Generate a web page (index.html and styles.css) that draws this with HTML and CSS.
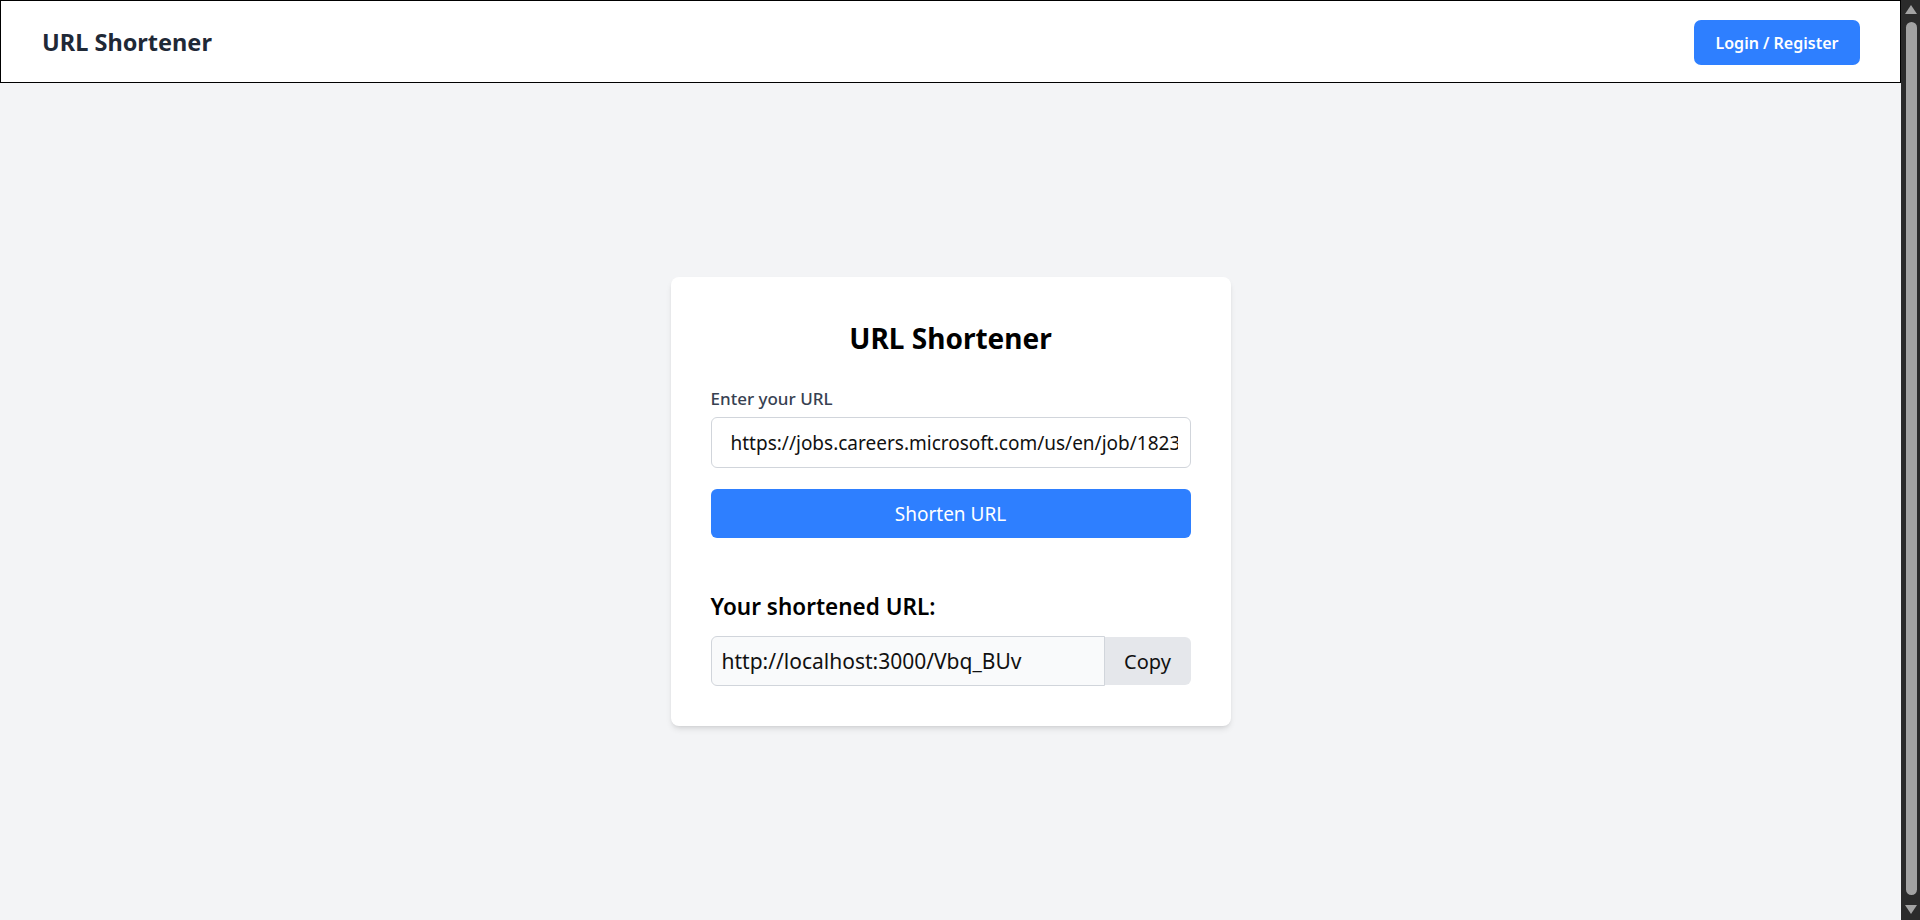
FILE: index.html
```html
<!DOCTYPE html>
<html lang="en">
<head>
<meta charset="utf-8">
<title>URL Shortener</title>
<link rel="stylesheet" href="styles.css">
</head>
<body>
<div class="app">
  <div class="main">
    <header class="topbar">
      <h1 class="brand">URL Shortener</h1>
      <button class="login-btn" type="button">Login / Register</button>
    </header>
    <main class="content">
      <section class="card">
        <h2 class="card-title">URL Shortener</h2>
        <form class="form">
          <label class="label" for="url">Enter your URL</label>
          <input class="url-input" id="url" type="text" value="https://jobs.careers.microsoft.com/us/en/job/1823456/Software-Engineer">
          <button class="shorten-btn" type="button">Shorten URL</button>
        </form>
        <div class="result">
          <h3 class="result-title">Your shortened URL:</h3>
          <div class="result-row">
            <input class="result-input" type="text" value="http://localhost:3000/Vbq_BUv" readonly>
            <button class="copy-btn" type="button">Copy</button>
          </div>
        </div>
      </section>
    </main>
  </div>
  <div class="scrollbar">
    <div class="arrow arrow-up"></div>
    <div class="thumb"></div>
    <div class="arrow arrow-down"></div>
  </div>
</div>
</body>
</html>
```
FILE: styles.css
```css
* { box-sizing: border-box; }
html, body { margin: 0; padding: 0; height: 100%; }
body {
  font-family: "Noto Sans", "Open Sans", sans-serif;
  background: #f3f4f6;
  color: #111827;
  overflow: hidden;
}
.app { display: flex; height: 920px; }
.main { flex: 1; display: flex; flex-direction: column; min-width: 0; }

.topbar {
  height: 83px;
  border: 1px solid #000;
  background: #fff;
  display: flex;
  align-items: center;
  justify-content: space-between;
  padding: 0 40px 0 41px;
}
.brand {
  margin: 0;
  font-size: 23.5px;
  font-weight: 700;
  color: #1f2937;
}
.login-btn {
  font-family: inherit;
  font-size: 16px;
  font-weight: 600;
  color: #fff;
  background: #2e7fff;
  border: none;
  border-radius: 7px;
  height: 45px;
  width: 166px;
  margin-top: 2px;
}

.content {
  flex: 1;
  display: flex;
  align-items: center;
  justify-content: center;
}
.card {
  width: 560px;
  background: #fff;
  border-radius: 8px;
  box-shadow: 0 4px 6px -1px rgba(0,0,0,0.1), 0 2px 4px -2px rgba(0,0,0,0.1);
  padding: 40px;
}
.card-title {
  margin: 3px 0 31px;
  text-align: center;
  font-size: 28px;
  line-height: 36px;
  font-weight: 700;
  color: #000;
}
.form { display: flex; flex-direction: column; }
.label {
  font-size: 17px;
  line-height: 24px;
  font-weight: 500;
  color: #374151;
  margin-bottom: 6px;
}
.url-input {
  height: 51px;
  border: 1px solid #d1d5db;
  border-radius: 6px;
  padding: 0 12px 0 19px;
  font-family: inherit;
  font-size: 19px;
  color: #111;
  background: #fff;
  outline: none;
}
.shorten-btn {
  margin-top: 21px;
  height: 49px;
  border: none;
  border-radius: 6px;
  background: #2e7fff;
  color: #fff;
  font-family: inherit;
  font-size: 19px;
}
.result { margin-top: 54px; }
.result-title {
  margin: 0 0 14px;
  font-size: 22.5px;
  line-height: 30px;
  font-weight: 600;
  color: #000;
}
.result-row { display: flex; height: 50px; }
.result-input {
  flex: 1;
  min-width: 0;
  border: 1px solid #d1d5db;
  border-radius: 6px 0 0 6px;
  background: #f9fafb;
  padding: 0 10px;
  font-family: inherit;
  font-size: 21px;
  color: #111;
  outline: none;
}
.copy-btn {
  width: 86px;
  border: none;
  border-radius: 0 6px 6px 0;
  background: #e5e7eb;
  color: #111;
  font-family: inherit;
  font-size: 20px;
  margin: 1px 0;
}

.scrollbar {
  width: 19px;
  background: #2b2b2b;
  display: flex;
  flex-direction: column;
  align-items: center;
  padding: 5px 0 6px;
}
.arrow { width: 0; height: 0; border-left: 6px solid transparent; border-right: 6px solid transparent; }
.arrow-up { border-bottom: 9px solid #a3a3a3; margin-left: 1px; }
.arrow-down { border-top: 9px solid #a3a3a3; margin-left: 1px; }
.thumb {
  flex: 1;
  width: 11px;
  margin: 8px 0 10px 1px;
  background: #a3a3a3;
  border-radius: 6px;
}
```
